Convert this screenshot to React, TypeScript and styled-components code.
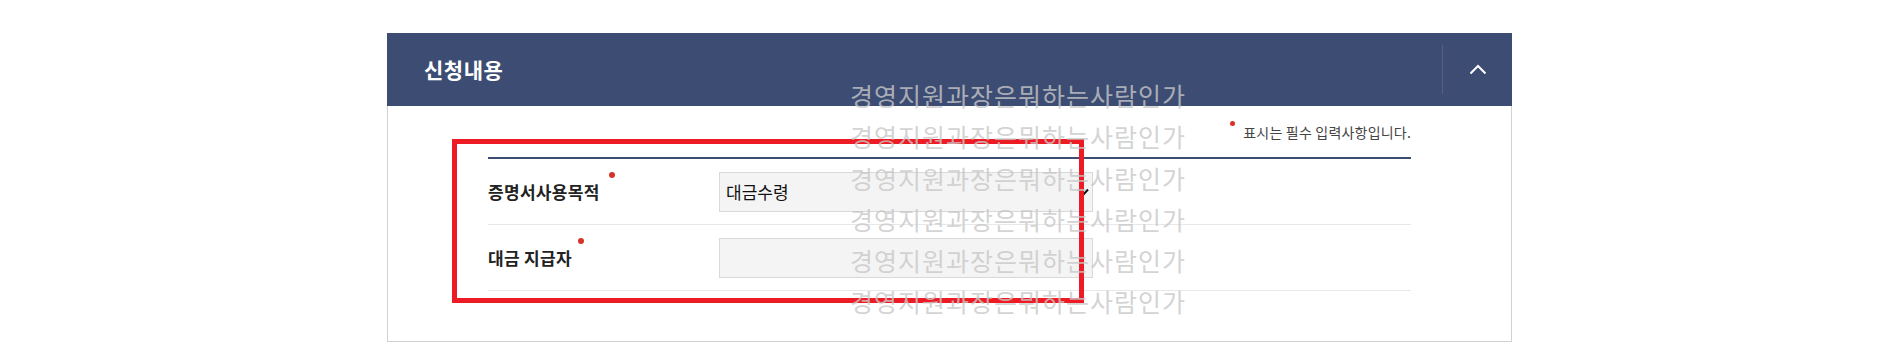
import React from "react";
import styled, { createGlobalStyle } from "styled-components";

const GlobalStyle = createGlobalStyle`
  html, body { margin: 0; padding: 0; background: #fff; }
  body { font-family: "Noto Sans CJK KR", "Noto Sans", sans-serif; }
  * { box-sizing: border-box; }
`;

const Page = styled.div`
  padding: 33px 0 20px 387px;
`;

const Panel = styled.section`
  position: relative;
  width: 1125px;
`;

const Header = styled.div`
  display: flex;
  align-items: center;
  height: 73px;
  padding-left: 37px;
  background: #3c4c72;
`;

const Title = styled.h2`
  flex: 1;
  margin: 0;
  padding-bottom: 2px;
  font-size: 21px;
  font-weight: 700;
  letter-spacing: 0.5px;
  color: #fff;
`;

const Toggle = styled.button`
  display: flex;
  align-items: center;
  justify-content: center;
  width: 70px;
  height: 49px;
  padding: 0;
  border: 0;
  border-left: 1px solid rgba(255, 255, 255, 0.12);
  background: transparent;
  cursor: pointer;
`;

const Body = styled.div`
  padding: 0 100px 50px;
  border: 1px solid #d2d2d2;
  border-top: 0;
`;

const Note = styled.div`
  display: flex;
  align-items: center;
  justify-content: flex-end;
  height: 51px;
  font-size: 14px;
  letter-spacing: 0.2px;
  color: #444;
`;

const Dot = styled.span<{ $size: number; $gap: number; $lift: number }>`
  flex: none;
  width: ${(p) => p.$size}px;
  height: ${(p) => p.$size}px;
  margin-left: ${(p) => p.$gap}px;
  margin-right: ${(p) => (p.$gap === 0 ? 8 : 0)}px;
  margin-bottom: ${(p) => p.$lift}px;
  border-radius: 50%;
  background: #d7332a;
`;

const Table = styled.div`
  border-top: 2px solid #3c4c72;
`;

const Row = styled.div`
  display: flex;
  align-items: center;
  height: 66px;
  border-bottom: 1px solid #e8e8e8;
`;

const LabelCell = styled.div`
  display: flex;
  align-items: center;
  width: 231px;
  font-size: 17px;
  font-weight: 700;
  letter-spacing: 0.3px;
  color: #222;
`;

const SelectBox = styled.div`
  position: relative;
  display: flex;
  align-items: center;
  width: 374px;
  height: 40px;
  padding-left: 6px;
  background: #f4f4f4;
  border: 1px solid #d9d9d9;
  font-size: 17px;
  color: #111;
`;

const SelectArrow = styled.svg`
  position: absolute;
  right: 3px;
  top: 50%;
  transform: translateY(-50%);
`;

const TextInput = styled.input`
  width: 374px;
  height: 40px;
  padding: 0 6px;
  background: #f4f4f4;
  border: 1px solid #d9d9d9;
  border-radius: 0;
  font-family: inherit;
  font-size: 17px;
  color: #111;
  outline: none;
`;

const Highlight = styled.div`
  position: absolute;
  left: 65px;
  top: 106px;
  width: 632px;
  height: 164px;
  border: 5px solid #ed1c24;
  pointer-events: none;
  z-index: 1;
`;

const Watermark = styled.div`
  position: absolute;
  left: 463px;
  top: 42px;
  font-size: 25px;
  font-weight: 400;
  letter-spacing: 1px;
  line-height: 41.3px;
  color: rgba(200, 200, 200, 0.8);
  white-space: nowrap;
  pointer-events: none;
  z-index: 2;
`;

const WATERMARK = "경영지원과장은뭐하는사람인가";

export default function App() {
  return (
    <>
      <GlobalStyle />
      <Page>
        <Panel>
          <Header>
            <Title>신청내용</Title>
            <Toggle aria-label="접기">
              <svg width="18" height="11" viewBox="0 0 18 11" fill="none">
                <path d="M1.5 9.5 L9 2 L16.5 9.5" stroke="#fff" strokeWidth="2" />
              </svg>
            </Toggle>
          </Header>
          <Body>
            <Note>
              <Dot $size={5} $gap={0} $lift={17} />
              표시는 필수 입력사항입니다.
            </Note>
            <Table>
              <Row>
                <LabelCell>
                  증명서사용목적
                  <Dot $size={6} $gap={9} $lift={33} />
                </LabelCell>
                <SelectBox role="combobox">
                  대금수령
                  <SelectArrow width="11" height="8" viewBox="0 0 11 8" fill="none">
                    <path d="M1 1.5 L5.5 6.5 L10 1.5" stroke="#111" strokeWidth="2" />
                  </SelectArrow>
                </SelectBox>
              </Row>
              <Row>
                <LabelCell>
                  대금 지급자
                  <Dot $size={6} $gap={6} $lift={33} />
                </LabelCell>
                <TextInput type="text" readOnly defaultValue="" />
              </Row>
            </Table>
          </Body>
          <Highlight />
          <Watermark>
            {Array.from({ length: 6 }).map((_, i) => (
              <div key={i}>{WATERMARK}</div>
            ))}
          </Watermark>
        </Panel>
      </Page>
    </>
  );
}
